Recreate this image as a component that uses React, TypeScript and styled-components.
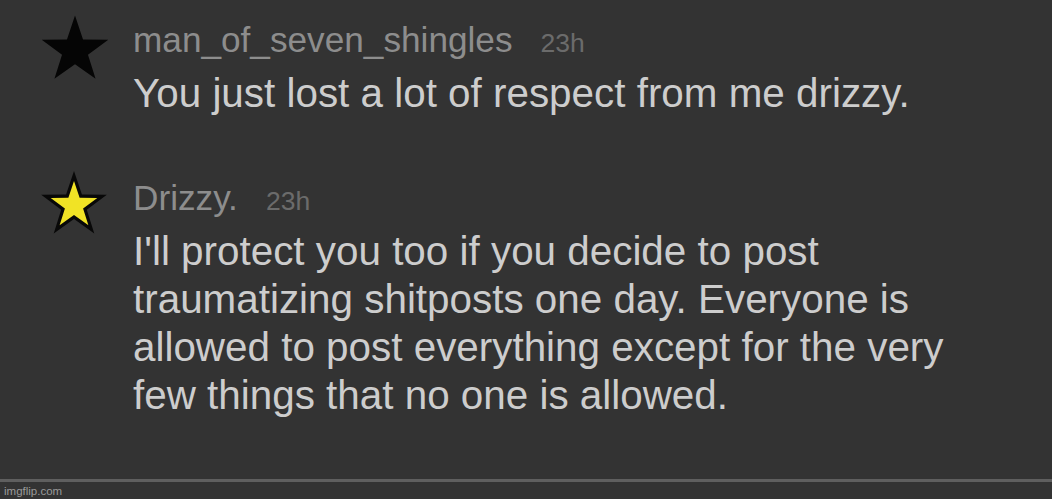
import React from "react";
import styled, { createGlobalStyle } from "styled-components";

const Global = createGlobalStyle`
  html, body { margin: 0; padding: 0; background: #333333; }
  body { font-family: "Liberation Sans", Arial, Helvetica, sans-serif; }
`;

const Page = styled.div`
  width: 1052px;
  height: 499px;
  background: #333333;
  display: flex;
  flex-direction: column;
  overflow: hidden;
`;

const Thread = styled.div`
  flex: 1;
  display: flex;
  flex-direction: column;
  gap: 57px;
  padding: 16px 0 0 40px;
`;

const Row = styled.div`
  display: flex;
  align-items: flex-start;
`;

const Avatar = styled.div<{ $shift: number }>`
  width: 93px;
  flex: none;
  display: flex;
  margin-top: ${(p) => p.$shift}px;
`;

const Content = styled.div`
  padding-top: 4px;
  display: flex;
  flex-direction: column;
`;

const Header = styled.div`
  display: flex;
  align-items: baseline;
  height: 40px;
  line-height: 40px;
`;

const Name = styled.span`
  font-size: 35.2px;
  color: #8d8d8d;
  margin-right: 28px;
`;

const Time = styled.span`
  font-size: 26.5px;
  color: #6b6b6b;
`;

const Body = styled.div`
  margin-top: 9px;
  font-size: 40.4px;
  line-height: 48px;
  color: #cdcdcd;
  width: 860px;
`;

const Footer = styled.div`
  height: 17px;
  border-top: 3px solid #5f5f5f;
  display: flex;
  align-items: center;
  padding-left: 4px;
  font-size: 11.5px;
  color: #9a9a9a;
`;

function starPoints(cx: number, cy: number, R: number, ratio = 0.39): string {
  const r = R * ratio;
  const pts: string[] = [];
  for (let i = 0; i < 10; i++) {
    const rad = i % 2 === 0 ? R : r;
    const a = -Math.PI / 2 + (i * Math.PI) / 5;
    pts.push(`${(cx + rad * Math.cos(a)).toFixed(2)},${(cy + rad * Math.sin(a)).toFixed(2)}`);
  }
  return pts.join(" ");
}

const BlackStar = () => (
  <svg width="70" height="68" viewBox="0 0 70 68">
    <polygon points={starPoints(35, 35.5, 35)} fill="#050505" />
  </svg>
);

const YellowStar = () => (
  <svg width="70" height="70" viewBox="0 0 70 70">
    <polygon points={starPoints(34, 35.5, 34.5)} fill="#080808" />
    <polygon points={starPoints(34, 35.5, 24.5)} fill="#f1e325" />
  </svg>
);

type Comment = { name: string; time: string; text: string; star: "black" | "yellow" };

const comments: Comment[] = [
  {
    name: "man_of_seven_shingles",
    time: "23h",
    text: "You just lost a lot of respect from me drizzy.",
    star: "black",
  },
  {
    name: "Drizzy.",
    time: "23h",
    text:
      "I'll protect you too if you decide to post traumatizing shitposts one day. Everyone is allowed to post everything except for the very few things that no one is allowed.",
    star: "yellow",
  },
];

export default function App() {
  return (
    <>
      <Global />
      <Page>
        <Thread>
          {comments.map((c, i) => (
            <Row key={i}>
              <Avatar $shift={c.star === "yellow" ? -4 : -1}>
                {c.star === "black" ? <BlackStar /> : <YellowStar />}
              </Avatar>
              <Content>
                <Header>
                  <Name>{c.name}</Name>
                  <Time>{c.time}</Time>
                </Header>
                <Body>{c.text}</Body>
              </Content>
            </Row>
          ))}
        </Thread>
        <Footer>imgflip.com</Footer>
      </Page>
    </>
  );
}
